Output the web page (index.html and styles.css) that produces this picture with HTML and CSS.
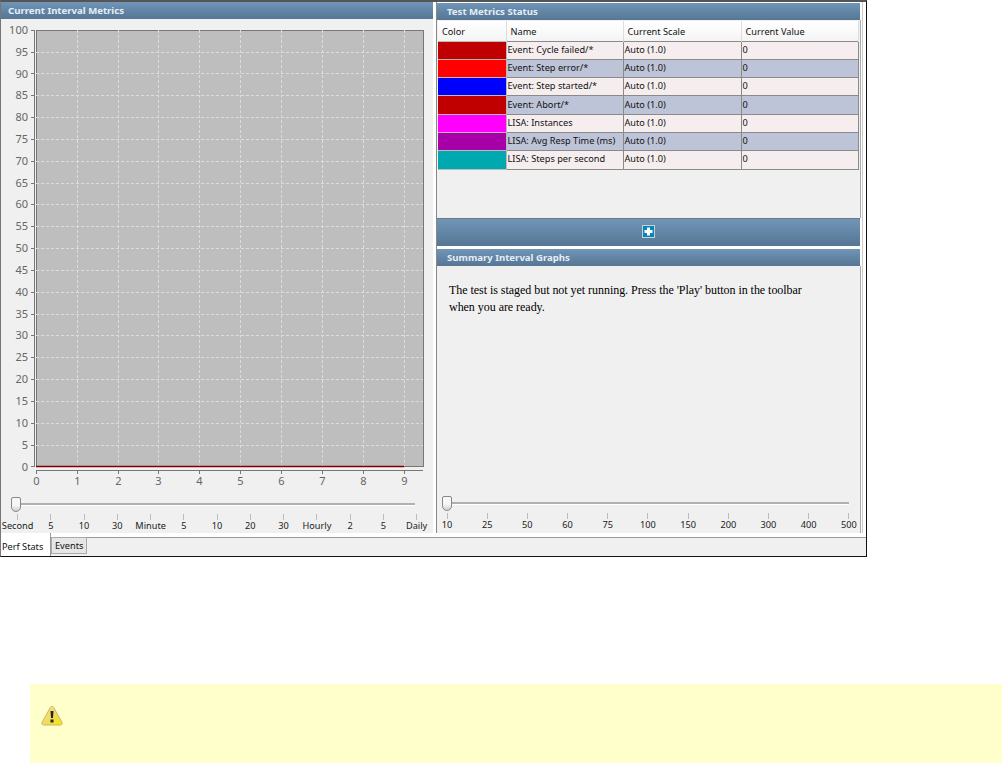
FILE: index.html
```html
<!DOCTYPE html>
<html lang="en">
<head>
<meta charset="utf-8">
<title>Perf Stats</title>
<link rel="stylesheet" href="styles.css">
</head>
<body>
<div class="window">
  <div class="panes">
    <section class="left">
      <h2 class="head">Current Interval Metrics</h2>
      <svg class="chart" width="432" height="474" viewBox="0 19 432 474">
        <rect class="plot" x="35.5" y="30.5" width="387" height="436"/>
        <path class="grid" d="M76.5 30V466M117.5 30V466M157.5 30V466M198.5 30V466M239.5 30V466M280.5 30V466M321.5 30V466M362.5 30V466M403.5 30V466M35 52.5H422M35 73.5H422M35 95.5H422M35 117.5H422M35 139.500H422M35 161.5H422M35 183.5H422M35 204.5H422M35 226.5H422M35 248.5H422M35 270.5H422M35 292.5H422M35 314.5H422M35 335.5H422M35 357.5H422M35 379.5H422M35 401.5H422M35 423.5H422M35 445.5H422"/>
        <path class="axis" d="M33.5 30V467M35 470.5H422"/>
        <path class="tick" d="M30 30.5H33M30 52.5H33M30 73.5H33M30 95.5H33M30 117.5H33M30 139.5H33M30 161.5H33M30 183.5H33M30 204.5H33M30 226.5H33M30 248.5H33M30 270.5H33M30 292.5H33M30 314.5H33M30 335.5H33M30 357.5H33M30 379.5H33M30 401.5H33M30 423.5H33M30 445.5H33M30 466.5H33M35.5 470V474M76.5 470V474M117.5 470V474M157.5 470V474M198.5 470V474M239.5 470V474M280.5 470V474M321.5 470V474M362.5 470V474M403.5 470V474"/>
        <path class="series" d="M35 466.5H403"/>
        <g class="ylabels">
          <text x="27" y="34">100</text><text x="27" y="56">95</text><text x="27" y="78">90</text><text x="27" y="99">85</text><text x="27" y="121">80</text><text x="27" y="143">75</text><text x="27" y="165">70</text><text x="27" y="187">65</text><text x="27" y="208">60</text><text x="27" y="230">55</text><text x="27" y="252">50</text><text x="27" y="274">45</text><text x="27" y="296">40</text><text x="27" y="318">35</text><text x="27" y="339">30</text><text x="27" y="361">25</text><text x="27" y="383">20</text><text x="27" y="405">15</text><text x="27" y="427">10</text><text x="27" y="449">5</text><text x="27" y="471">0</text>
        </g>
        <g class="xlabels">
          <text x="35.5" y="485">0</text><text x="76.5" y="485">1</text><text x="117.5" y="485">2</text><text x="157.5" y="485">3</text><text x="198.5" y="485">4</text><text x="239.5" y="485">5</text><text x="280.5" y="485">6</text><text x="321.5" y="485">7</text><text x="362.5" y="485">8</text><text x="403.5" y="485">9</text>
        </g>
      </svg>
      <div class="slider slider-left">
        <div class="track"><span class="thumb"></span></div>
        <div class="scale scale-left">
          <span>Second</span><span>5</span><span>10</span><span>30</span><span>Minute</span><span>5</span><span>10</span><span>20</span><span>30</span><span>Hourly</span><span>2</span><span>5</span><span>Daily</span>
        </div>
      </div>
    </section>
    <section class="right">
      <h2 class="head head-right">Test Metrics Status</h2>
      <div class="table-area">
        <table class="metrics">
          <thead>
            <tr><th class="c1">Color</th><th class="c2">Name</th><th class="c3">Current Scale</th><th class="c4">Current Value</th></tr>
          </thead>
          <tbody>
            <tr class="odd"><td class="sw dred"></td><td>Event: Cycle failed/*</td><td>Auto (1.0)</td><td>0</td></tr>
            <tr class="even"><td class="sw red"></td><td>Event: Step error/*</td><td>Auto (1.0)</td><td>0</td></tr>
            <tr class="odd"><td class="sw blue"></td><td>Event: Step started/*</td><td>Auto (1.0)</td><td>0</td></tr>
            <tr class="even"><td class="sw dred"></td><td>Event: Abort/*</td><td>Auto (1.0)</td><td>0</td></tr>
            <tr class="odd"><td class="sw magenta"></td><td>LISA: Instances</td><td>Auto (1.0)</td><td>0</td></tr>
            <tr class="even"><td class="sw purple"></td><td>LISA: Avg Resp Time (ms)</td><td>Auto (1.0)</td><td>0</td></tr>
            <tr class="odd"><td class="sw teal"></td><td>LISA: Steps per second</td><td>Auto (1.0)</td><td>0</td></tr>
          </tbody>
        </table>
      </div>
      <div class="addbar">
        <svg width="13" height="13" viewBox="0 0 13 13"><rect x=".5" y=".5" width="12" height="12" fill="#0a86b4" stroke="#c9d2da"/><path d="M5 2.5h3V5h2.500v3H8v2.500H5V8H2.500V5H5z" fill="#fff"/></svg>
      </div>
      <h2 class="head head-right head-summary">Summary Interval Graphs</h2>
      <div class="summary">
        <p class="note">The test is staged but not yet running. Press the 'Play' button in the toolbar<br>when you are ready.</p>
        <div class="slider slider-right">
          <div class="track"><span class="thumb"></span></div>
          <div class="scale scale-right">
            <span>10</span><span>25</span><span>50</span><span>60</span><span>75</span><span>100</span><span>150</span><span>200</span><span>300</span><span>400</span><span>500</span>
          </div>
        </div>
      </div>
    </section>
  </div>
  <div class="tabs">
    <span class="tab active">Perf Stats</span>
    <div class="tabstrip"><span class="tab">Events</span></div>
  </div>
</div>
<div class="warning">
  <svg width="24" height="22" viewBox="0 0 24 22"><defs><linearGradient id="wg" x1="0" y1="0" x2="1" y2="1"><stop offset="0" stop-color="#f3e3a8"/><stop offset=".55" stop-color="#f0dc60"/><stop offset="1" stop-color="#f5e600"/></linearGradient></defs><path d="M12 1.500c1 0 1.500.5 2 1.500l8 14.500c.6 1.200 0 2.500-1.500 2.500h-17C2 20 1.400 18.700 2 17.500L10 3c.5-1 1-1.500 2-1.500z" fill="url(#wg)" stroke="#d3b45e"/><path d="M10.500 6h3l-.5 7h-2zM10.500 14.500h3v3h-3z" fill="#2a2a10"/></svg>
</div>
</body>
</html>
```
FILE: styles.css
```css
* { box-sizing: border-box; }
html, body { margin: 0; padding: 0; background: #fff; }
body { font-family: "Noto Sans", sans-serif; }

.window {
  width: 867px;
  height: 557px;
  border-top: 2px solid #555;
  border-right: 1px solid #111;
  border-bottom: 1px solid #111;
  border-left: 1px solid #777;
  display: flex;
  flex-direction: column;
  background: #fff;
}
.panes { display: flex; height: 531px; flex: none; }

.head {
  margin: 0;
  height: 17px;
  padding: 0 0 0 7px;
  font: bold 9.6px/17px "Noto Sans", sans-serif;
  color: #e6eef5;
  background: linear-gradient(#6f95b8, #567694);
}

.left {
  width: 432px;
  flex: none;
  background: #f0f0f0;
}
.chart { display: block; }
.plot { fill: #bebebe; stroke: #777; }
.grid { fill: none; stroke: #dcdcdc; stroke-dasharray: 3 2; }
.axis { fill: none; stroke: #777; }
.tick { fill: none; stroke: #777; }
.series { fill: none; stroke: #800000; stroke-width: 1.500; }
.ylabels text, .xlabels text {
  font-family: "Noto Sans", sans-serif;
  font-size: 11px;
  fill: #666;
}
.ylabels text { text-anchor: end; }
.xlabels text { text-anchor: middle; }

.slider { position: relative; }
.slider-left { margin-top: 10px; }
.track {
  position: relative;
  height: 2px;
  background: #b0b0b0;
  border-bottom: 1px solid #fff;
  box-sizing: content-box;
}
.slider-left .track { width: 399px; margin-left: 15px; }
.slider-right .track { width: 402px; margin-left: 10px; }
.thumb {
  position: absolute;
  left: -5px;
  top: -6px;
  width: 10px;
  height: 15px;
  border: 1px solid #888;
  border-radius: 2px 2px 5px 5px;
  background: linear-gradient(#f6f6f6 55%, #cfcfcf);
}
.scale {
  margin-top: 8px;
  font-size: 9.2px;
  line-height: 12px;
  color: #222;
  text-align: center;
}
.scale span {
  padding-top: 6px;
  background: linear-gradient(#bcbcbc, #bcbcbc) center top / 1px 6px no-repeat;
  white-space: nowrap;
  display: flex;
  justify-content: center;
}
.scale-left { display: grid; grid-template-columns: repeat(13, 33.25px); }
.scale-right { display: flex; justify-content: space-between; margin-left: -2px; width: 426px; }
.scale-right span { width: 24px; }

.right {
  width: 427px;
  flex: none;
  margin-left: 3px;
  padding-top: 1px;
  background: #fff;
  display: flex;
  flex-direction: column;
  border-left: 1px solid #888;
  border-right: 1px solid #ccc;
}
.head-right { width: 423px; padding-left: 10px; }
.table-area {
  height: 198px;
  width: 424px;
  background: #f0f0f0;
  padding: 1px 0 0 1px;
  border-right: 1px solid #aaa;
}
.metrics {
  border-collapse: collapse;
  table-layout: fixed;
  width: 421px;
  font-size: 9.2px;
  color: #111;
}
.metrics th {
  height: 20px;
  padding: 2px 0 0 4px;
  font-weight: normal;
  text-align: left;
  background: linear-gradient(#fff, #f4f4f4);
  border-right: 1px solid #ddd;
}
.metrics td {
  height: 18.300px;
  padding: 0 0 2px 1px;
  border: 1px solid #8a8a8a;
  white-space: nowrap;
  overflow: hidden;
}
.c1 { width: 68px; }
.c2 { width: 117px; }
.c3 { width: 118px; }
.odd td { background: #f6eeee; }
.even td { background: #bec4d8; }
.metrics td.sw { border-color: #bbb; border-left: 0; }
.metrics td.dred { background: #c00000; }
.metrics td.red { background: #ff0000; }
.metrics td.blue { background: #0000ff; }
.metrics td.magenta { background: #ff00ff; }
.metrics td.purple { background: #a800a8; }
.metrics td.teal { background: #00a8b0; }

.addbar {
  width: 423px;
  height: 28px;
  border-top: 1px solid #777;
  padding-bottom: 2px;
  background: linear-gradient(#6f95b8, #567694);
  display: flex;
  align-items: center;
  justify-content: center;
}
.head-summary { margin-top: 3px; }
.summary {
  flex: 1;
  width: 424px;
  background: #f0f0f0;
  display: flex;
  flex-direction: column;
  border-right: 1px solid #aaa;
}
.note {
  margin: 16px 0 0 12px;
  font: 12px/17px "Liberation Serif", serif;
  letter-spacing: -0.04px;
  color: #000;
  height: 220px;
}

.tabs {
  flex: 1;
  display: flex;
  align-items: stretch;
  background: #fff;
  font-size: 9.2px;
  color: #111;
}
.tab { white-space: nowrap; }
.tab.active {
  background: #fff;
  width: 50px;
  padding: 7px 0 0 1px;
  border-right: 1px solid #999;
}
.tabstrip {
  flex: 1;
  margin-top: 4px;
  background: #f0f0f0;
  border-top: 1px solid #999;
  display: flex;
  align-items: flex-start;
}
.tabstrip .tab {
  height: 17px;
  margin-top: -1px;
  padding: 1px 3px;
  line-height: 13px;
  background: #e6e6e6;
  border: 1px solid #aaa;
}

.warning {
  margin: 127px 0 0 30px;
  height: 79px;
  background: #ffffcc;
  padding: 21px 0 0 10px;
}
.warning svg { display: block; }
```
